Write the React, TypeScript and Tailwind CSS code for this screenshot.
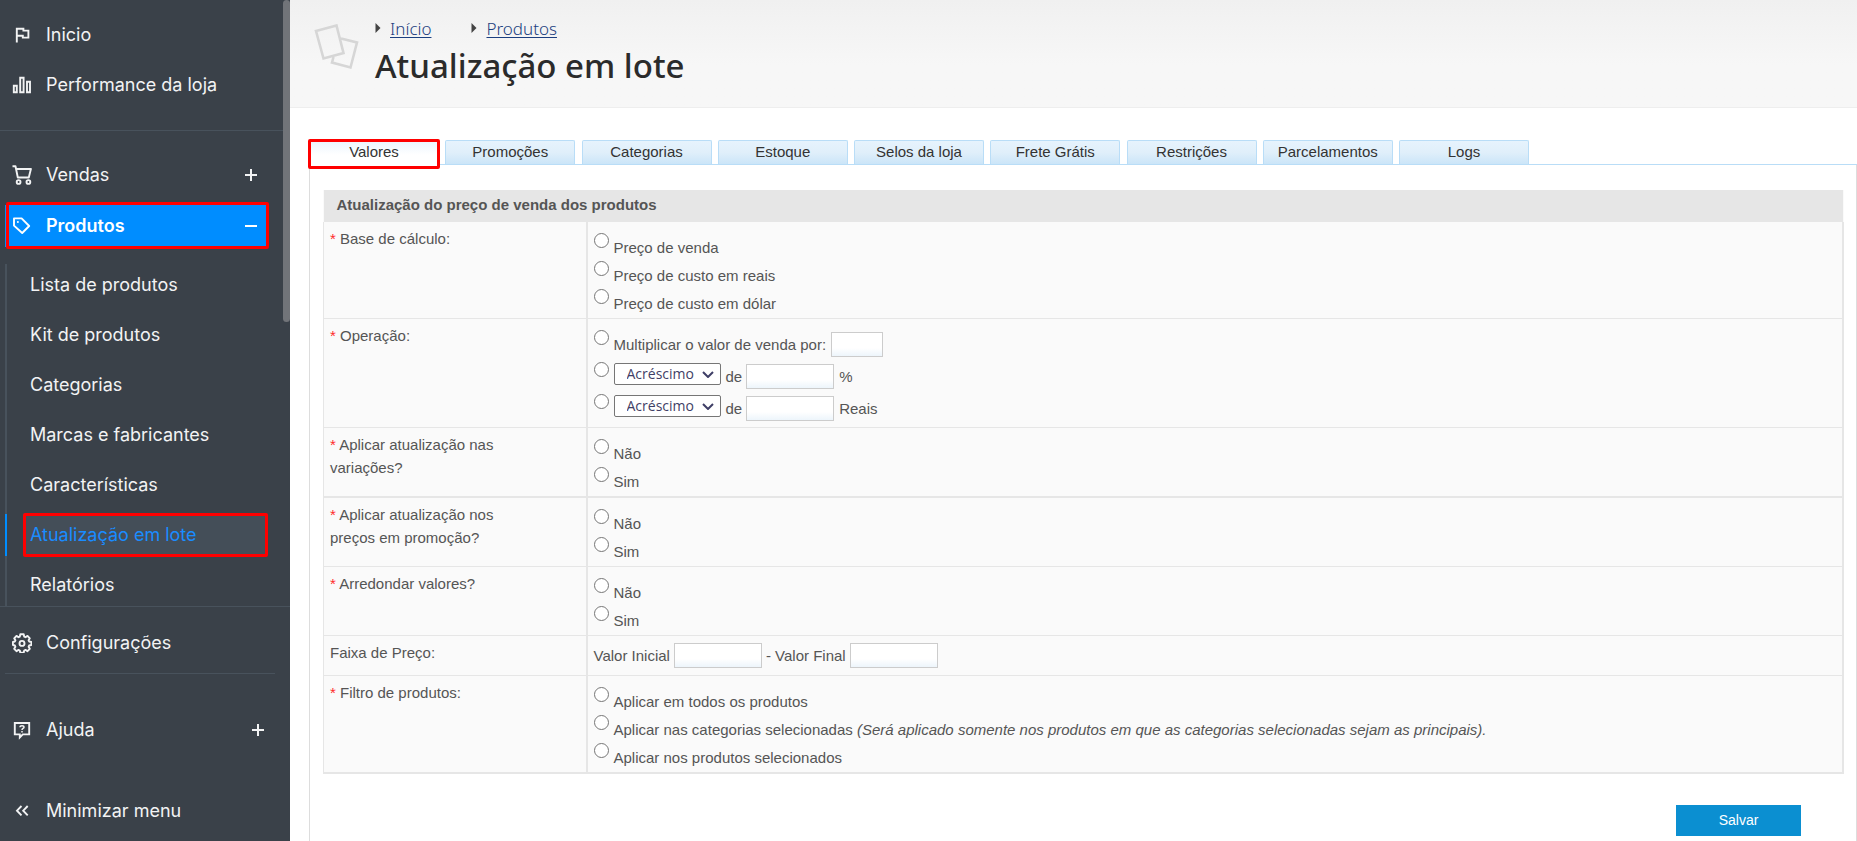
import React from "react";

type IconProps = { children: React.ReactNode };

function NavIcon({ children }: IconProps) {
  return (
    <svg
      className="size-5 shrink-0"
      viewBox="0 0 20 20"
      fill="none"
      stroke="currentColor"
      strokeWidth="1.9"
      aria-hidden="true"
    >
      {children}
    </svg>
  );
}

const icons = {
  flag: (
    <NavIcon>
      <path d="M4.8 17.5V3.8h6.6v1.8h5v7h-5.6v-1.8H4.8" />
    </NavIcon>
  ),
  bars: (
    <NavIcon>
      <path d="M1.8 10.8h3v6.4h-3zM8.2 2.8h3.4v14.4H8.2zM15 6.8h3v10.4h-3z" />
    </NavIcon>
  ),
  cart: (
    <NavIcon>
      <path d="M0.5 1.3h3l2.3 11.2h11L18.9 4H4.2" strokeLinejoin="round" />
      <circle cx="6.6" cy="17" r="1.9" />
      <circle cx="16.4" cy="17" r="1.9" />
    </NavIcon>
  ),
  tag: (
    <NavIcon>
      <path d="M2 2.4h7.6l7.6 7.6-7 7L2 9.6z" strokeLinejoin="round" />
      <circle cx="5.9" cy="5.9" r="1" fill="currentColor" stroke="none" />
    </NavIcon>
  ),
  gear: (
    <NavIcon>
      <path
        strokeLinejoin="round"
        d="M8.3 1.3h3.4l.5 2.3 1.3.6 2-1.3 2.3 2.4-1.2 2 .5 1.2 2.3.5v3l-2.3.5-.5 1.3 1.2 2-2.3 2.4-2-1.3-1.3.6-.5 2.2H8.3l-.5-2.2-1.3-.6-2 1.3-2.3-2.4 1.2-2-.5-1.3L.9 12V9l2-.5.5-1.2-1.2-2 2.3-2.4 2 1.3 1.3-.6z"
      />
      <circle cx="10" cy="10.4" r="2.5" />
    </NavIcon>
  ),
  help: (
    <NavIcon>
      <path d="M2.8 3h14.4v11.4h-6.4l-3 3v-3h-5z" />
      <path d="M8 7.200c0-2 4-2 4 0 0 1.300-2 1.300-2 2.700M10 11v1.400" strokeWidth="1.500" />
    </NavIcon>
  ),
  collapse: (
    <NavIcon>
      <path d="M9.500 5 5 9.700l4.500 4.700M15.700 5l-4.500 4.700 4.500 4.700" />
    </NavIcon>
  ),
};

function Sign({ open }: { open?: boolean }) {
  return (
    <svg className="size-3 shrink-0" viewBox="0 0 12 12" stroke="currentColor" strokeWidth="2" aria-hidden="true">
      <path d={open ? "M0 6h12" : "M0 6h12M6 0v12"} />
    </svg>
  );
}

function NavRow({
  icon,
  label,
  sign,
  className = "",
}: {
  icon: React.ReactNode;
  label: string;
  sign?: React.ReactNode;
  className?: string;
}) {
  return (
    <a href="#" className={`flex items-center pl-3 ${className}`}>
      {icon}
      <span className="ml-[14px] flex-1">{label}</span>
      {sign}
    </a>
  );
}

const productLinks = [
  "Lista de produtos",
  "Kit de produtos",
  "Categorias",
  "Marcas e fabricantes",
  "Características",
  "Atualização em lote",
  "Relatórios",
];

function Highlight({ className }: { className: string }) {
  return <span aria-hidden="true" className={`pointer-events-none absolute rounded-xs border-3 border-[#ff0000] ${className}`} />;
}

function Sidebar() {
  return (
    <aside className="relative w-[290px] shrink-0 bg-[#3a4149] font-['Inter',sans-serif] text-[18px] leading-6 text-[#f2f3f4]">
      <div className="absolute top-0 right-0 h-[322px] w-[7px] rounded-full bg-[#717479]" />
      <nav aria-label="Menu principal">
        <div className="pt-[10px] pb-5">
          <NavRow icon={icons.flag} label="Inicio" className="h-[50px]" />
          <NavRow icon={icons.bars} label="Performance da loja" className="h-[50px]" />
        </div>
        <div className="mr-[7px] h-px bg-[#48525c]" />
        <div className="pt-[19px]">
          <NavRow icon={icons.cart} label="Vendas" sign={<Sign />} className="h-[50px] pr-[33px]" />
        </div>
        <div className="relative mt-[5px] mr-6 ml-[5px]">
          <a href="#" className="flex h-[42px] items-center bg-[#008dff] pr-[9px] pl-[7px] font-semibold text-white">
            {icons.tag}
            <span className="ml-[14px] flex-1">Produtos</span>
            <Sign open />
          </a>
          <Highlight className="-top-[3px] right-[-3px] bottom-[-2px] left-px" />
        </div>
        <ul className="relative mt-[17px] ml-[5px] flex flex-col gap-2 border-l-2 border-[#48525c]">
          {productLinks.map((label) =>
            label === "Atualização em lote" ? (
              <li key={label} className="relative -ml-[2px] border-l-2 border-[#008dff] pl-4">
                <a href="#" aria-current="page" className="mr-6 flex h-[42px] items-center bg-[#444e58] pl-[7px] text-[#1a8cff]">
                  {label}
                </a>
                <Highlight className="-top-px right-[22px] bottom-[-1px] left-4" />
              </li>
            ) : (
              <li key={label}>
                <a href="#" className="flex h-[42px] items-center pl-[23px]">
                  {label}
                </a>
              </li>
            ),
          )}
        </ul>
        <div className="h-px bg-[#48525c]" />
        <NavRow icon={icons.gear} label="Configurações" className="mt-[11px] h-[50px]" />
        <div className="mt-[5px] mr-[15px] ml-[5px] h-px bg-[#48525c]" />
        <NavRow icon={icons.help} label="Ajuda" sign={<Sign />} className="mt-[31px] h-[50px] pr-[26px]" />
        <button type="button" className="mt-[31px] flex h-[50px] w-full items-center pl-3 text-left">
          {icons.collapse}
          <span className="ml-[14px]">Minimizar menu</span>
        </button>
      </nav>
    </aside>
  );
}

function Crumb({ label }: { label: string }) {
  return (
    <li className="flex items-center">
      <svg className="mr-[9px] mb-[2px] h-[10px] w-[6px]" viewBox="0 0 6 10" aria-hidden="true">
        <path d="M0.500 0 5.500 5l-5 5z" fill="#444" />
      </svg>
      <a href="#" className="text-[#1c3f80] underline underline-offset-2">
        {label}
      </a>
    </li>
  );
}

function PageHeader() {
  return (
    <header className="flex h-[108px] border-b border-[#eeeeee] bg-linear-to-b from-[#f0f0f0] to-[#f7f7f7] to-60% pl-6 font-['Noto_Sans','Open_Sans',sans-serif]">
      <svg className="mt-6 h-[46px] w-[46px]" viewBox="0 0 46 46" fill="none" stroke="#d6d6d6" strokeWidth="2.600" aria-hidden="true">
        <path d="M27 14.500 43 18.500 36.500 43.500 18 38.500 19.500 33" />
        <path d="M2 7 22.500 1.500 29.500 29 9.500 34.500z" />
      </svg>
      <div className="ml-[15px] pt-[17px]">
        <ol className="flex gap-10 text-[17px] leading-6 font-light">
          <Crumb label="Início" />
          <Crumb label="Produtos" />
        </ol>
        <h1 className="mt-px text-[33px] leading-[48px] font-medium text-[#2b2b2b]">Atualização em lote</h1>
      </div>
    </header>
  );
}

const tabs = [
  "Valores",
  "Promoções",
  "Categorias",
  "Estoque",
  "Selos da loja",
  "Frete Grátis",
  "Restrições",
  "Parcelamentos",
  "Logs",
];

function Tabs() {
  return (
    <div className="border-b border-[#b9ddf7]">
      <div role="tablist" className="flex w-[1220px] justify-between">
        {tabs.map((label, i) =>
          i === 0 ? (
            <div key={label} className="relative">
              <button
                type="button"
                role="tab"
                aria-selected="true"
                className="-mb-px h-[25px] w-[130px] rounded-t-xs bg-linear-to-b from-[#eaf4fd] to-white to-60% pb-[2px]"
              >
                {label}
              </button>
              <Highlight className="-top-px -right-px bottom-[-5px] -left-px" />
            </div>
          ) : (
            <button
              key={label}
              type="button"
              role="tab"
              aria-selected="false"
              className="h-6 w-[130px] rounded-t-xs border border-b-0 border-[#b9ddf7] bg-linear-to-b from-[#e6f3fd] via-[#e0effa] to-[#cbe5f8] pb-[2px]"
            >
              {label}
            </button>
          ),
        )}
      </div>
    </div>
  );
}

const inputClass = "h-[25px] border border-[#cccccc] bg-linear-to-b from-white from-65% to-[#edf5fb] px-1";

function Radio({ id, name }: { id: string; name: string }) {
  return (
    <input
      id={id}
      type="radio"
      name={name}
      className="mt-[3px] mr-[5px] size-[15px] shrink-0 appearance-none rounded-full border border-[#767676] bg-white checked:border-4 checked:border-[#0b8fd1]"
    />
  );
}

function Option({ name, value, children }: { name: string; value: string; children: React.ReactNode }) {
  const id = `${name}-${value}`;
  return (
    <div className="flex h-7 items-start">
      <Radio id={id} name={name} />
      <label htmlFor={id} className="mt-2 leading-5">
        {children}
      </label>
    </div>
  );
}

function AmountOption({ id, unit }: { id: string; unit: string }) {
  return (
    <div className="flex h-8 items-start">
      <Radio id={id} name="operacao" />
      <div className="relative mt-1 mr-[5px] h-[22px] w-[107px] rounded-xs border border-[#767676] bg-white font-['Open_Sans',sans-serif] text-[#3f3f66]">
        <select aria-label={`Tipo de operação em ${unit}`} className="block h-5 w-full appearance-none pl-3 text-[14px] leading-5">
          <option>Acréscimo</option>
          <option>Desconto</option>
        </select>
        <svg className="pointer-events-none absolute top-[7px] right-[6px] h-[7px] w-3" viewBox="0 0 12 7" fill="none" stroke="currentColor" strokeWidth="2" aria-hidden="true">
          <path d="m1 1 5 5 5-5" />
        </svg>
      </div>
      <label htmlFor={`${id}-valor`} className="mt-2 mr-1 leading-5">
        de
      </label>
      <input id={`${id}-valor`} type="text" className={`mt-[5px] mr-[5px] w-[88px] ${inputClass}`} />
      <label htmlFor={id} className="mt-2 leading-5">
        {unit}
      </label>
    </div>
  );
}

function Row({
  label,
  optional,
  thick,
  children,
}: {
  label: string;
  optional?: boolean;
  thick?: boolean;
  children: React.ReactNode;
}) {
  return (
    <tr className={`border-[#e6e6e6] ${thick ? "border-b-2" : "border-b"}`}>
      <th scope="row" className="border-r-2 border-l border-[#e6e6e6] pt-[5px] pl-[6px] text-left align-top font-normal">
        <div className={`max-w-[180px] leading-[23px] ${optional ? "" : "before:text-[#ff2a2a] before:content-['*_']"}`}>
          {label}
        </div>
      </th>
      <td className="border-r-2 border-[#e6e6e6] pt-2 pb-1 pl-[6px] align-top">{children}</td>
    </tr>
  );
}

function YesNo({ name }: { name: string }) {
  return (
    <>
      <Option name={name} value="nao">Não</Option>
      <Option name={name} value="sim">Sim</Option>
    </>
  );
}

function PriceForm() {
  return (
    <form className="flex flex-1 flex-col border-x border-[#dddddd] pt-[25px] pr-3 pl-[13px] text-[#555555]" onSubmit={(e) => e.preventDefault()}>
      <table className="w-full table-fixed border-collapse bg-[#fafafa]">
        <colgroup>
          <col className="w-[263px]" />
          <col />
        </colgroup>
        <thead>
          <tr className="bg-[#e6e6e6]">
            <th colSpan={2} className="h-8 pb-[2px] pl-[13px] text-left leading-5 font-bold">
              Atualização do preço de venda dos produtos
            </th>
          </tr>
        </thead>
        <tbody>
          <Row label="Base de cálculo:">
            <Option name="base" value="venda">Preço de venda</Option>
            <Option name="base" value="reais">Preço de custo em reais</Option>
            <Option name="base" value="dolar">Preço de custo em dólar</Option>
          </Row>
          <Row label="Operação:">
            <div className="flex h-8 items-start">
              <Radio id="op-multiplicar" name="operacao" />
              <label htmlFor="op-multiplicar" className="mt-2 mr-[5px] leading-5">
                Multiplicar o valor de venda por:
              </label>
              <input type="text" aria-label="Multiplicador" className={`mt-[5px] w-[52px] ${inputClass}`} />
            </div>
            <AmountOption id="op-percentual" unit="%" />
            <AmountOption id="op-reais" unit="Reais" />
          </Row>
          <Row label="Aplicar atualização nas variações?" thick>
            <YesNo name="variacoes" />
          </Row>
          <Row label="Aplicar atualização nos preços em promoção?">
            <YesNo name="promocao" />
          </Row>
          <Row label="Arredondar valores?">
            <YesNo name="arredondar" />
          </Row>
          <Row label="Faixa de Preço:" optional>
            <div className="-mt-px flex items-center pb-[3px]">
              <label htmlFor="valor-inicial">Valor Inicial</label>
              <input id="valor-inicial" type="text" className={`mx-1 w-[88px] ${inputClass}`} />
              <label htmlFor="valor-final">- Valor Final</label>
              <input id="valor-final" type="text" className={`mx-1 w-[88px] ${inputClass}`} />
            </div>
          </Row>
          <Row label="Filtro de produtos:" thick>
            <Option name="filtro" value="todos">Aplicar em todos os produtos</Option>
            <Option name="filtro" value="categorias">
              Aplicar nas categorias selecionadas{" "}
              <em>(Será aplicado somente nos produtos em que as categorias selecionadas sejam as principais).</em>
            </Option>
            <Option name="filtro" value="produtos">Aplicar nos produtos selecionados</Option>
          </Row>
        </tbody>
      </table>
      <div className="mt-[31px] flex justify-end pr-[43px]">
        <button type="submit" className="h-[31px] w-[125px] bg-[#0b8fd1] pb-px text-[14px] text-white">
          Salvar
        </button>
      </div>
    </form>
  );
}

export default function App() {
  return (
    <div className="flex min-h-screen bg-white">
      <Sidebar />
      <main className="flex min-w-0 flex-1 flex-col">
        <PageHeader />
        <div className="ml-[19px] flex flex-1 flex-col pt-8 font-['Liberation_Sans',Arial,sans-serif] text-[15px] leading-5 text-[#333333]">
          <Tabs />
          <PriceForm />
        </div>
      </main>
    </div>
  );
}
